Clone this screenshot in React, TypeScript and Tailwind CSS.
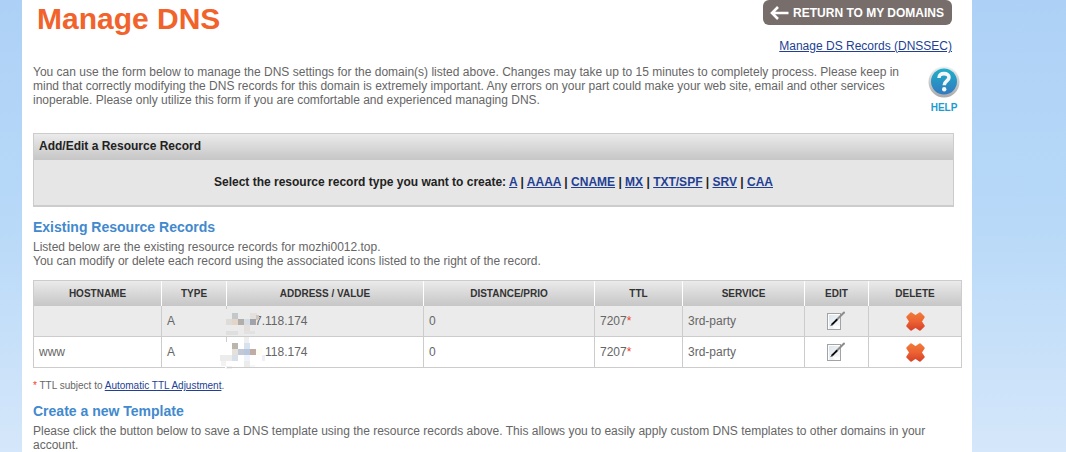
import type { ReactNode } from "react";

const RECORD_TYPES = ["A", "AAAA", "CNAME", "MX", "TXT/SPF", "SRV", "CAA"];

const COLUMNS = [
    { label: "HOSTNAME", width: "w-[128px]" },
    { label: "TYPE", width: "w-[65px]" },
    { label: "ADDRESS / VALUE", width: "w-[197px]" },
    { label: "DISTANCE/PRIO", width: "w-[171px]" },
    { label: "TTL", width: "w-[88px]" },
    { label: "SERVICE", width: "w-[122px]" },
    { label: "EDIT", width: "w-[64px]" },
    { label: "DELETE", width: "w-[93px]" },
];

const RECORDS = [
    { id: 1, host: "", type: "A", value: "7.118.174", indent: "pl-[28px]", prio: 0, ttl: 7207, service: "3rd-party" },
    { id: 2, host: "www", type: "A", value: "118.174", indent: "pl-[38px]", prio: 0, ttl: 7207, service: "3rd-party" },
];

// x, y, width, height, fill
const MASK: [number, number, number, number, string][] = [
    [6, 3, 3, 27, "#ebebeb"],
    [13, 7, 6, 6, "#c3c8cd"],
    [31, 7, 7, 6, "#e6e0dc"],
    [7, 13, 6, 6, "#dfdbd8"],
    [13, 13, 6, 6, "#e3d6c8"],
    [19, 13, 6, 6, "#b3aeaa"],
    [25, 13, 6, 6, "#d5dde4"],
    [31, 13, 6, 6, "#a3a3ac"],
    [37, 9, 3, 5, "#cfc8c2"],
    [25, 19, 6, 6, "#e5dedb"],
    [7, 25, 12, 4, "#dfdfdf"],
    [25, 25, 11, 3, "#e2e2e2"],
    [6, 36, 3, 26, "#ffffff"],
    [7, 30, 1, 6, "#cccccc"],
    [25, 31, 5, 6, "#efefef"],
    [25, 37, 6, 6, "#d8e2ee"],
    [13, 37, 6, 6, "#bab5ad"],
    [13, 43, 6, 6, "#e6e0da"],
    [19, 43, 6, 6, "#c3c8d8"],
    [25, 43, 6, 6, "#b8c6dc"],
    [31, 43, 6, 6, "#bfaca5"],
    [37, 43, 6, 6, "#fffdf2"],
    [1, 49, 12, 6, "#ececec"],
    [13, 49, 6, 6, "#d8dfe8"],
    [25, 49, 6, 6, "#eef3fb"],
    [43, 49, 3, 6, "#eef0f6"],
    [2, 55, 5, 5, "#f2f2f2"],
    [7, 60, 6, 3, "#f2f2f2"],
    [25, 55, 6, 6, "#ececec"],
    [31, 59, 5, 3, "#f7f7f7"],
];

const AddressMask = () => (
    <svg className="absolute -left-2 top-0" width="50" height="64" shapeRendering="crispEdges" aria-hidden="true">
        {MASK.map(([x, y, w, h, fill]) => <rect key={`${x}-${y}`} x={x} y={y} width={w} height={h} fill={fill} />)}
    </svg>
);

const EditIcon = () => (
    <svg width="19" height="20" viewBox="0 0 19 20" aria-hidden="true">
        <defs>
            <linearGradient id="page" x1="0" y1="0" x2="1" y2="1">
                <stop offset="0" stopColor="#d9e3ec" />
                <stop offset="1" stopColor="#fbfcfd" />
            </linearGradient>
        </defs>
        <rect x="0.500" y="2.500" width="13" height="16" fill="url(#page)" stroke="#a3a3a3" />
        <path d="M1.500 18V3.500H13" fill="none" stroke="#ffffff" />
        <path d="M4.500 14l3.500 4h5v-3z" fill="#ffffff" opacity="0.8" />
        <path d="M9 9.500L17 1.500" stroke="#8c8c8c" strokeWidth="2" strokeLinecap="round" />
        <path d="M5 13.500L9.700 8.800" stroke="#0c0c0c" strokeWidth="1.800" strokeLinecap="round" />
        <path d="M3.500 15L5.500 13" stroke="#555555" strokeWidth="1" />
    </svg>
);

const DeleteIcon = () => (
    <svg width="19" height="19" viewBox="0 0 19 19" aria-hidden="true">
        <defs>
            <linearGradient id="cross" x1="0" y1="0" x2="0" y2="1">
                <stop offset="0" stopColor="#f07838" />
                <stop offset="0.500" stopColor="#ec6232" />
                <stop offset="1" stopColor="#d9442a" />
            </linearGradient>
        </defs>
        <path
            d="M5 1.500L9.500 4.500L14 1.500L17.500 5L14.500 9.500L17.500 14L14 17.500L9.500 14.500L5 17.500L1.500 14L4.500 9.500L1.500 5Z"
            fill="url(#cross)"
            stroke="url(#cross)"
            strokeWidth="2.400"
            strokeLinejoin="round"
        />
    </svg>
);

const HelpIcon = () => (
    <svg width="32" height="32" viewBox="0 0 32 32" aria-hidden="true">
        <defs>
            <linearGradient id="helpRing" x1="0" y1="0" x2="0" y2="1">
                <stop offset="0" stopColor="#efefef" />
                <stop offset="1" stopColor="#a9a9ab" />
            </linearGradient>
            <linearGradient id="helpFill" x1="0" y1="0" x2="0" y2="1">
                <stop offset="0" stopColor="#1fb0c8" />
                <stop offset="1" stopColor="#3279c0" />
            </linearGradient>
        </defs>
        <circle cx="16" cy="16" r="15.500" fill="url(#helpRing)" />
        <circle cx="16" cy="15.500" r="13" fill="url(#helpFill)" />
        <path d="M11 12C11 8.800 13 7.600 16 7.600C19 7.600 21 9.200 21 11.500C21 14.800 16.200 15 16.200 19.200" fill="none" stroke="#f4f6f8" strokeWidth="3.600" />
        <circle cx="16.200" cy="23.200" r="2.200" fill="#f4f6f8" />
    </svg>
);

const SectionTitle = ({ children }: { children: ReactNode }) => (
    <h2 className="text-[14px] leading-4 font-bold text-[#4289cd]">{children}</h2>
);

const App = () => {
    return (
        <div className="min-h-screen bg-linear-to-b from-[#add1f6] via-[#b8d9f8] via-50% to-[#d5e7fa] pl-[22px] pr-[94px] font-['Liberation_Sans',Arial,sans-serif] text-[12px] leading-[14px] text-[#666666]">
            <main className="min-h-screen bg-white pl-[11px] pr-[10px]">
                <header className="flex items-start justify-between pr-[10px]">
                    <h1 className="pl-1 pt-[2px] text-[30px] leading-[34px] font-bold text-[#f1632a]">Manage DNS</h1>
                    <div className="flex flex-col items-end gap-[14px]">
                        <button type="button" className="flex h-[25px] items-center gap-1 rounded-md bg-[#776e6c] pl-[7px] pr-2 text-[12px] font-bold whitespace-nowrap text-white">
                            <svg width="19" height="14" viewBox="0 0 19 14" aria-hidden="true">
                                <path d="M18.500 7H2M8 1L2 7L8 13" fill="none" stroke="#ffffff" strokeWidth="2.600" />
                            </svg>
                            RETURN TO MY DOMAINS
                        </button>
                        <a href="#dnssec" className="text-[#233f94] underline">Manage DS Records (DNSSEC)</a>
                    </div>
                </header>

                <div className="mt-3 flex items-start justify-between gap-6">
                    <p>
                        You can use the form below to manage the DNS settings for the domain(s) listed above. Changes may take up to 15 minutes to completely process. Please keep in mind that correctly modifying the DNS records for this domain is extremely important. Any errors on your part could make your web site, email and other services inoperable. Please only utilize this form if you are comfortable and experienced managing DNS.
                    </p>
                    <a href="#help" className="mt-px flex shrink-0 flex-col items-center gap-[3px] pr-[2px] text-[10px] font-bold text-[#1f9bd1]">
                        <HelpIcon />
                        HELP
                    </a>
                </div>

                <section className="mt-[18px] mr-2 border border-b-2 border-[#cccccc] bg-[#e6e6e6] font-bold text-[#222222]">
                    <h2 className="bg-linear-to-b from-[#ebebeb] to-[#c6c6c6] px-[5px] pt-[5px] pb-[7px]">Add/Edit a Resource Record</h2>
                    <p className="pt-[15px] pb-4 text-center">
                        Select the resource record type you want to create:{" "}
                        {RECORD_TYPES.map((type, i) => (
                            <span key={type}>
                                {i > 0 && " | "}
                                <a href={`#${type}`} className="text-[#233f94] underline">{type}</a>
                            </span>
                        ))}
                    </p>
                </section>

                <section className="mt-3">
                    <SectionTitle>Existing Resource Records</SectionTitle>
                    <p className="mt-[5px]">
                        Listed below are the existing resource records for mozhi0012.top.
                        <br />
                        You can modify or delete each record using the associated icons listed to the right of the record.
                    </p>

                    <table className="mt-3 w-full table-fixed border-separate border-spacing-0 border-t border-l border-[#cccccc]">
                        <thead>
                            <tr className="h-[25px] bg-linear-to-b from-[#ebebeb] to-[#c6c6c6] text-[10px] text-[#333333]">
                                {COLUMNS.map((col) => (
                                    <th key={col.label} scope="col" className={`${col.width} border-r border-white p-0 font-bold last:border-[#cccccc]`}>{col.label}</th>
                                ))}
                            </tr>
                        </thead>
                        <tbody className="[&_td]:h-[31px] [&_td]:border-r [&_td]:border-b [&_td]:border-[#cccccc] [&_td]:py-0">
                            {RECORDS.map((record) => (
                                <tr key={record.id} className="odd:bg-[#ebebeb]">
                                    <td className="px-[5px]">{record.host}</td>
                                    <td className="px-[5px]">{record.type}</td>
                                    <td className={`relative ${record.indent}`}>
                                        {record.value}
                                        {record.id === 1 && <AddressMask />}
                                    </td>
                                    <td className="px-[5px]">{record.prio}</td>
                                    <td className="px-[5px]">{record.ttl}<span className="text-[#f03c28]">*</span></td>
                                    <td className="px-[5px]">{record.service}</td>
                                    <td>
                                        <button type="button" aria-label="Edit record" className="mx-auto block"><EditIcon /></button>
                                    </td>
                                    <td>
                                        <button type="button" aria-label="Delete record" className="mx-auto block"><DeleteIcon /></button>
                                    </td>
                                </tr>
                            ))}
                        </tbody>
                    </table>

                    <p className="mt-[11px] text-[10px]">
                        <span className="text-[#f03c28]">*</span> TTL subject to <a href="#ttl" className="text-[#233f94] underline">Automatic TTL Adjustment</a>.
                    </p>
                </section>

                <section className="mt-[10px] pr-6">
                    <SectionTitle>Create a new Template</SectionTitle>
                    <p className="mt-[5px]">
                        Please click the button below to save a DNS template using the resource records above. This allows you to easily apply custom DNS templates to other domains in your account.
                    </p>
                </section>
            </main>
        </div>
    );
};

export default App;
